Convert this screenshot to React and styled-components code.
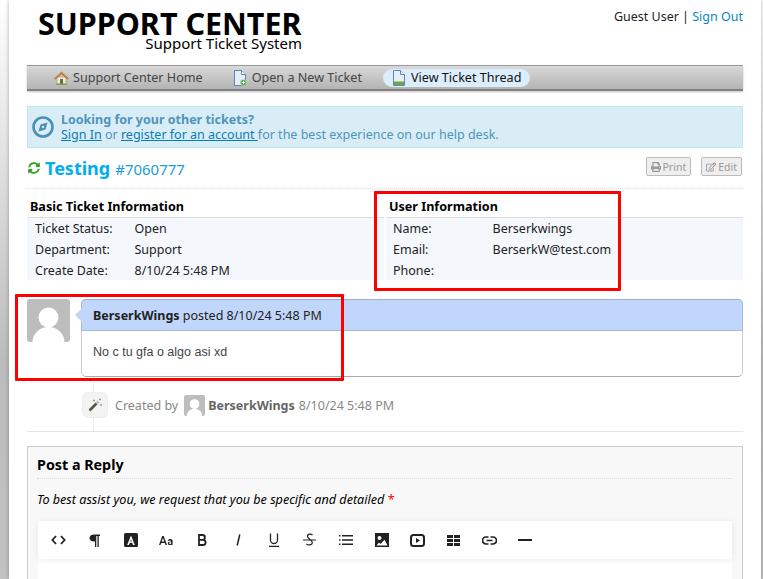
import React from 'react';
import styled, { createGlobalStyle } from 'styled-components';
import { FaPrint, FaRegEdit, FaSyncAlt } from 'react-icons/fa';

const GlobalStyle = createGlobalStyle`
  html, body {
    margin: 0;
    height: 100%;
    overflow: hidden;
    background: linear-gradient(#ffffff, #bcbcbc 62%, #c2c2c2);
    font-family: "Noto Sans", "Open Sans", sans-serif;
    font-size: 12.5px;
    color: #000;
  }
`;

const Page = styled.div`
  position: relative;
  width: 752px;
  height: 579px;
  margin-left: 9px;
  padding: 0 18px;
  box-sizing: border-box;
  background: #fff;
  box-shadow: 0 0 4px rgba(0, 0, 0, 0.3);
  overflow: hidden;
`;

const Header = styled.div`
  height: 65px;
  display: flex;
  justify-content: space-between;
`;

const Logo = styled.div`
  margin-left: 11px;
  width: 264px;
  text-align: right;
`;

const LogoTitle = styled.div`
  font-size: 30.5px;
  font-weight: 700;
  line-height: 22px;
  margin-top: 12px;
  white-space: nowrap;
  text-align: left;
`;

const LogoSub = styled.div`
  font-size: 15px;
  line-height: 18px;
`;

const UserBox = styled.div`
  margin-top: 8px;
  line-height: 18px;
  color: #222;
  a { color: #0a84c6; text-decoration: none; }
`;

const Nav = styled.div`
  height: 26px;
  box-sizing: border-box;
  display: flex;
  align-items: center;
  padding-left: 18px;
  gap: 12px;
  font-size: 12.6px;
  background: linear-gradient(#d8d8d8, #b4b4b4);
  border-top: 1px solid #9a9a9a;
  border-bottom: 2px solid #808080;
  box-shadow: 0 1px 2px rgba(0, 0, 0, 0.25);
`;

const NavItem = styled.div`
  display: flex;
  align-items: center;
  gap: ${(p) => (p.$home ? '4px' : '5px')};
  height: 18px;
  padding: 0 9px;
  border-radius: 9px;
  color: ${(p) => (p.$active ? '#111' : '#444')};
  background: ${(p) => (p.$active ? '#dcedfb' : 'transparent')};
  white-space: nowrap;
`;

const Banner = styled.div`
  margin-top: 15px;
  height: 42px;
  box-sizing: border-box;
  display: flex;
  align-items: center;
  gap: 7px;
  padding-left: 4px;
  background: #d9edf7;
  border: 1px solid #bce8f1;
  color: #4f94bb;
  line-height: 15px;
  a { color: #0a7cb8; text-decoration: underline; }
  b { font-weight: 700; }
`;

const TitleRow = styled.div`
  height: 41px;
  box-sizing: border-box;
  display: flex;
  align-items: flex-start;
  border-bottom: 1px dotted #ddd;
  padding-top: 8px;
`;

const TicketTitle = styled.div`
  display: flex;
  align-items: center;
  gap: 5px;
  height: 24px;
  flex: 1;
  padding-left: 1px;
  color: #00aeef;
  font-size: 18px;
  font-weight: 700;
  line-height: 24px;
  span {
    font-size: 15px;
    font-weight: 400;
    color: #1c9cd8;
    padding-top: 1px;
  }
`;

const ActionButton = styled.div`
  display: flex;
  align-items: center;
  gap: 2px;
  height: 19px;
  box-sizing: border-box;
  padding: 0 4px;
  margin: 1px 1px 0 9px;
  border: 1px solid #bbb;
  border-radius: 2px;
  background: #eee;
  color: #999;
  font-size: 10.5px;
`;

const InfoGrid = styled.div`
  display: flex;
  gap: 2px;
`;

const InfoColumn = styled.div`
  flex: ${(p) => p.$flex};
`;

const InfoHeading = styled.div`
  height: 29px;
  box-sizing: border-box;
  padding: 8px 0 0 3px;
  font-size: 12.6px;
  font-weight: 700;
  line-height: 19px;
  border-bottom: 1px solid #ddd;
`;

const InfoBody = styled.div`
  background: #f4f8fd;
  padding: 1px 0 0 ${(p) => p.$pad}px;
  box-sizing: border-box;
  height: 62px;
`;

const InfoRow = styled.div`
  display: flex;
  height: 21px;
  line-height: 20px;
  color: #222;
`;

const InfoLabel = styled.div`
  width: 99.5px;
`;

const Thread = styled.div`
  display: flex;
  margin-top: 19px;
`;

const Avatar = styled.div`
  width: 43px;
  height: 43px;
  flex: none;
  border-radius: 3px;
  background: #bdbdbd;
  overflow: hidden;
`;

const Bubble = styled.div`
  position: relative;
  margin-left: 11px;
  flex: 1;
  height: 78px;
  box-sizing: border-box;
  border: 1px solid #ccc;
  border-top: 0;
  border-bottom: 1px solid #aaa;
  border-radius: 5px;
  &::before {
    content: '';
    position: absolute;
    left: -7px;
    top: 9px;
    border: 7px solid transparent;
    border-left: 0;
    border-right-color: #c1d6f9;
  }
`;

const BubbleHead = styled.div`
  height: 32px;
  box-sizing: border-box;
  margin: 0 -1px;
  padding-left: 11px;
  line-height: 31px;
  color: #222;
  background: #c1d6fb;
  border: 1px solid #a4b7d6;
  border-top-color: #9fb0cc;
  border-radius: 5px 5px 0 0;
  b { font-weight: 700; }
`;

const BubbleBody = styled.div`
  padding: 13px 0 0 11px;
  font-family: "Liberation Sans", Arial, sans-serif;
  font-size: 12.5px;
  line-height: 16px;
  color: #444;
`;

const EventRow = styled.div`
  position: relative;
  height: 55px;
  box-sizing: border-box;
  display: flex;
  align-items: center;
  padding: 2px 0 0 55px;
  color: #888;
  border-bottom: 1px solid #e4e4e4;
  &::before {
    content: '';
    position: absolute;
    left: 66px;
    top: 0;
    bottom: 0;
    border-left: 1px dotted #ddd;
  }
  b { font-weight: 700; color: #666; margin-right: 4px; }
`;

const EventIcon = styled.div`
  position: relative;
  width: 26px;
  height: 26px;
  border-radius: 6px;
  background: #f3f3f3;
  border: 1px solid #eee;
  box-sizing: border-box;
  display: flex;
  align-items: center;
  justify-content: center;
  margin-right: 7px;
`;

const MiniAvatar = styled(Avatar)`
  width: 21px;
  height: 21px;
  margin: 0 3px 0 6px;
  border-radius: 2px;
`;

const Reply = styled.div`
  margin-top: 14px;
  height: 140px;
  box-sizing: border-box;
  background: #f8f8f8;
  border: 1px solid #ccc;
  padding: 0 9px;
`;

const ReplyTitle = styled.div`
  height: 32px;
  box-sizing: border-box;
  padding-top: 8px;
  font-size: 14.3px;
  font-weight: 700;
  line-height: 19px;
  border-bottom: 1px dotted #ddd;
`;

const ReplyHint = styled.div`
  height: 42px;
  box-sizing: border-box;
  padding-top: 12px;
  font-size: 12.6px;
  font-style: italic;
  line-height: 18px;
  span { color: #f00; font-style: normal; }
`;

const Editor = styled.div`
  margin: 0 1px;
  height: 100px;
  background: #fff;
`;

const Toolbar = styled.div`
  height: 38px;
  display: flex;
  align-items: center;
  padding-left: 3px;
  background: #fff;
  box-shadow: 0 1px 6px rgba(0, 0, 0, 0.08);
`;

const ToolIcon = styled.div`
  width: 35.85px;
  height: 20px;
  display: flex;
  align-items: center;
  justify-content: center;
  flex: none;
`;

const Annotation = styled.div`
  position: absolute;
  left: ${(p) => p.$x - 9}px;
  top: ${(p) => p.$y}px;
  width: ${(p) => p.$w}px;
  height: ${(p) => p.$h}px;
  box-sizing: border-box;
  border: 3px solid #f00;
  border-radius: 1px;
  pointer-events: none;
`;

function Person() {
  return (
    <svg width="100%" height="100%" viewBox="0 0 43 43">
      <circle cx="21.5" cy="18.5" r="10" fill="#fff" />
      <ellipse cx="21.5" cy="43" rx="16" ry="15" fill="#fff" />
    </svg>
  );
}

function HomeIcon() {
  return (
    <svg width="15" height="14" viewBox="0 0 15 14">
      <rect x="3" y="6" width="9" height="7" fill="#f3ead2" stroke="#a89a70" strokeWidth="0.6" />
      <rect x="6" y="8" width="3" height="5" fill="#6b6b52" />
      <path d="M0.5 7.5 7.5 1l7 6.500-1 .8L7.500 3 1.500 8.300z" fill="#c98a3c" stroke="#9a6526" strokeWidth="0.5" />
      <rect x="2" y="12.6" width="11" height="1.2" fill="#6da53a" />
    </svg>
  );
}

function DocIcon({ add }) {
  return (
    <svg width="14" height="16" viewBox="0 0 14 16">
      <path d="M1.500 0.500h7l4 4v11h-11z" fill="#e6eefa" stroke="#5b86b8" />
      <path d="M8.500 0.500v4h4" fill="#fff" stroke="#5b86b8" />
      {add ? (
        <>
          <circle cx="10.500" cy="12.500" r="3.200" fill="#55a548" stroke="#fff" strokeWidth="0.5" />
          <path d="M10.500 10.800v3.400M8.800 12.500h3.400" stroke="#fff" strokeWidth="1" />
        </>
      ) : (
        <rect x="2" y="11.500" width="10" height="3.500" fill="#6ea83f" />
      )}
    </svg>
  );
}

function CompassIcon() {
  return (
    <svg width="22" height="22" viewBox="0 0 22 22">
      <circle cx="11" cy="11" r="9.500" fill="none" stroke="#4a8fb5" strokeWidth="2.600" />
      <path d="M15.500 6.500 13.500 13.500 6.500 15.500 8.500 8.500z" fill="#4a8fb5" />
      <circle cx="11" cy="11" r="1.200" fill="#d9edf7" />
    </svg>
  );
}

function WandIcon() {
  return (
    <svg width="16" height="16" viewBox="0 0 16 16" fill="none">
      <path d="M2.500 13.500 9.500 6.500" stroke="#5a5147" strokeWidth="2.600" />
      <path d="M9.500 6.500 11.500 4.500" stroke="#bbb" strokeWidth="2.600" />
      <path d="M6 3.500h2M7 2.500v2M13 8h2M14 7v2M13 1.500v2M12 2.500h2" stroke="#8a8f99" strokeWidth="0.9" />
    </svg>
  );
}

function ToolSvg({ w, h, children, ...rest }) {
  return (
    <svg width={w} height={h} viewBox={`0 0 ${w} ${h}`} fill="#222" {...rest}>
      {children}
    </svg>
  );
}

const stroke = { fill: 'none', stroke: '#222' };

const tools = [
  <ToolSvg w={15} h={10} {...stroke} strokeWidth="1.800"><path d="M5 1 1.400 5 5 9M10 1l3.600 4L10 9" /></ToolSvg>,
  <ToolSvg w={11} h={13}><path d="M5 0.500H11v1.500H9.800V13H8.500V2H7.300V13H6V7.500H5C2.800 7.500 .500 6.400 .500 4S2.800 .500 5 .500z" /></ToolSvg>,
  <ToolSvg w={14} h={14}><rect width="14" height="14" rx="1.500" /><path d="M7 2.500 10.800 12H9L8.200 9.800H5.800L5 12H3.200zM6.300 8.400h1.400L7 6.200z" fill="#fff" /></ToolSvg>,
  <ToolSvg w={14} h={9}><path d="M3.200 0h1.500L8 9H6.500l-.7-2H2.200l-.7 2H0zM2.700 5.600h2.600L4 2z" /><path d="M11 3c1.600 0 2.600.6 2.600 2v4h-1.200l-.1-.6c-.4.4-.9.7-1.600.7-1.100 0-1.900-.7-1.900-1.700 0-1.200 1-1.900 3.300-1.900 0-.6-.4-.9-1.200-.9-.6 0-1 .2-1.500.5l-.5-.9C9.600 3.300 10.200 3 11 3zm1.100 3.300c-1.400.1-2 .4-2 1 0 .5.300.8.900.8.500 0 .900-.3 1.100-.6z" /></ToolSvg>,
  <ToolSvg w={9} h={12} {...stroke} strokeWidth="1.800"><path d="M1 1h3.500a2.400 2.400 0 0 1 0 4.800H1zM1 5.800h4a2.600 2.600 0 0 1 0 5.200H1z" /></ToolSvg>,
  <ToolSvg w={5} h={12} {...stroke} strokeWidth="1.500"><path d="M3.800 .500 1.200 11.500" /></ToolSvg>,
  <ToolSvg w={10} h={14} {...stroke} strokeWidth="1.300"><path d="M1.500 .500v6.500a3.500 3.500 0 0 0 7 0V.500M0 13.300h10" /></ToolSvg>,
  <ToolSvg w={13} h={14} {...stroke} strokeWidth="1.200"><path d="M9.500 2.200C8.500.800 4.500.600 4.500 3.300 4.500 6 9.300 6.500 9.300 9.500c0 2.800-4.500 3-6 1.300M0 7h13" /></ToolSvg>,
  <ToolSvg w={14} h={10}><path d="M0 0h1.500v1.600H0zM0 4.200h1.500v1.600H0zM0 8.400h1.500V10H0zM3 0h11v1.600H3zM3 4.200h11v1.600H3zM3 8.400h11V10H3z" /></ToolSvg>,
  <ToolSvg w={14} h={14}><rect width="14" height="14" /><circle cx="4.500" cy="5" r="2" fill="#fff" /><path d="M1.500 12.500 4 9.500l1.500 1.500L9.500 6.800l3 5.700z" fill="#fff" /></ToolSvg>,
  <ToolSvg w={15} h={13}><rect x="1" y="1" width="13" height="11" rx="2.500" fill="none" stroke="#222" strokeWidth="2" /><path d="M6 4v5l4-2.500z" /></ToolSvg>,
  <ToolSvg w={13} h={11}><path d="M0 0h6v3H0zM7 0h6v3H7zM0 4h6v3H0zM7 4h6v3H7zM0 8h6v3H0zM7 8h6v3H7z" /></ToolSvg>,
  <ToolSvg w={15} h={9} {...stroke} strokeWidth="1.700"><path d="M6.500 1H4a3.500 3.500 0 0 0 0 7h2.500M8.500 1H11a3.500 3.500 0 0 1 0 7H8.500M4.500 4.500h6" /></ToolSvg>,
  <ToolSvg w={14} h={2}><rect width="14" height="2" /></ToolSvg>,
];

export default function App() {
  return (
    <>
      <GlobalStyle />
      <Page>
        <Header>
          <Logo>
            <LogoTitle>SUPPORT CENTER</LogoTitle>
            <LogoSub>Support Ticket System</LogoSub>
          </Logo>
          <UserBox>
            Guest User | <a href="#signout">Sign Out</a>
          </UserBox>
        </Header>
        <Nav>
          <NavItem $home><HomeIcon />Support Center Home</NavItem>
          <NavItem><DocIcon add />Open a New Ticket</NavItem>
          <NavItem $active><DocIcon />View Ticket Thread</NavItem>
        </Nav>
        <Banner>
          <CompassIcon />
          <div>
            <b>Looking for your other tickets?</b>
            <br />
            <a href="#signin">Sign In</a> or <a href="#register">register for an account </a>
            for the best experience on our help desk.
          </div>
        </Banner>
        <TitleRow>
          <TicketTitle>
            <FaSyncAlt size={12} color="#2ca01c" />
            Testing <span>#7060777</span>
          </TicketTitle>
          <ActionButton><FaPrint size={10} />Print</ActionButton>
          <ActionButton><FaRegEdit size={10} />Edit</ActionButton>
        </TitleRow>
        <InfoGrid>
          <InfoColumn $flex="0 0 357px">
            <InfoHeading>Basic Ticket Information</InfoHeading>
            <InfoBody $pad={8}>
              <InfoRow><InfoLabel>Ticket Status:</InfoLabel>Open</InfoRow>
              <InfoRow><InfoLabel>Department:</InfoLabel>Support</InfoRow>
              <InfoRow><InfoLabel>Create Date:</InfoLabel>8/10/24 5:48 PM</InfoRow>
            </InfoBody>
          </InfoColumn>
          <InfoColumn $flex="1">
            <InfoHeading>User Information</InfoHeading>
            <InfoBody $pad={7}>
              <InfoRow><InfoLabel>Name:</InfoLabel>Berserkwings</InfoRow>
              <InfoRow><InfoLabel>Email:</InfoLabel>BerserkW@test.com</InfoRow>
              <InfoRow><InfoLabel>Phone:</InfoLabel></InfoRow>
            </InfoBody>
          </InfoColumn>
        </InfoGrid>
        <Thread>
          <Avatar><Person /></Avatar>
          <Bubble>
            <BubbleHead><b>BerserkWings</b> posted 8/10/24 5:48 PM</BubbleHead>
            <BubbleBody>No c tu gfa o algo asi xd</BubbleBody>
          </Bubble>
        </Thread>
        <EventRow>
          <EventIcon><WandIcon /></EventIcon>
          Created by
          <MiniAvatar><Person /></MiniAvatar>
          <b>BerserkWings</b> 8/10/24 5:48 PM
        </EventRow>
        <Reply>
          <ReplyTitle>Post a Reply</ReplyTitle>
          <ReplyHint>To best assist you, we request that you be specific and detailed <span>*</span></ReplyHint>
          <Editor>
            <Toolbar>
              {tools.map((icon, i) => <ToolIcon key={i}>{icon}</ToolIcon>)}
            </Toolbar>
          </Editor>
        </Reply>
        <Annotation $x={374} $y={191} $w={247} $h={100} />
        <Annotation $x={15} $y={294} $w={329} $h={87} />
      </Page>
    </>
  );
}
